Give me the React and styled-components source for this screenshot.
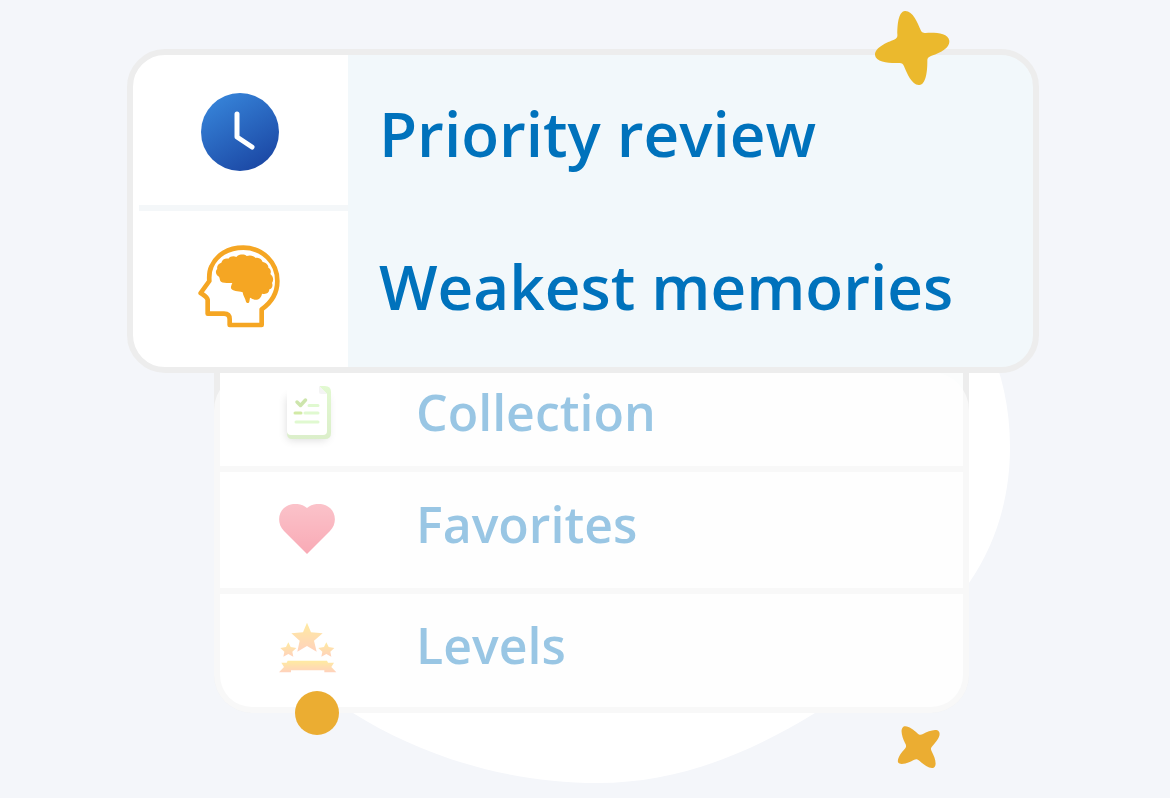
import React from 'react'
import styled, { createGlobalStyle } from 'styled-components'

const GlobalStyle = createGlobalStyle`
  * {
    box-sizing: border-box;
  }

  body {
    margin: 0;
    background: #f4f6fa;
    font-family: "Open Sans", "Noto Sans", sans-serif;
  }
`

const Stage = styled.main`
  position: relative;
  max-width: 1170px;
  min-height: 798px;
  margin: 0 auto;
  padding: 49px 131px 0 127px;
  overflow: hidden;
`

const Blob = styled.svg`
  position: absolute;
  left: 300px;
  top: 340px;
`

const Decoration = styled.svg`
  position: absolute;
  z-index: 3;
  left: ${({ $left }) => $left}px;
  top: ${({ $top }) => $top}px;
`

const MainCard = styled.ul`
  position: relative;
  z-index: 2;
  margin: 0;
  padding: 0 0 6px;
  list-style: none;
  border: 6px solid #ededed;
  border-radius: 38px;
  overflow: hidden;
  background: linear-gradient(to right, #fff 215px, #f2f8fb 215px);
`

const MoreCard = styled.ul`
  position: relative;
  z-index: 1;
  margin: -16px 70px 0 87px;
  padding: 0;
  list-style: none;
  border: 6px solid #ededed;
  border-top: 0;
  border-radius: 0 0 38px 38px;
  background: linear-gradient(to right, #fff 180px, #fcfdfd 180px);

  /* the fade over the rows that are not in focus */
  &::after {
    content: "";
    position: absolute;
    inset: 15px -6px -6px;
    border-radius: 38px;
    background: rgba(255, 255, 255, 0.6);
    pointer-events: none;
  }
`

const Item = styled.li`
  ${MoreCard} &:not(:first-child) {
    border-top: 6px solid #ededed;
  }
`

const ItemButton = styled.button`
  display: flex;
  align-items: stretch;
  width: 100%;
  height: ${({ $height }) => $height}px;
  padding: 0;
  border: 0;
  background: none;
  font: inherit;
  text-align: left;
  cursor: pointer;
`

const IconCell = styled.span`
  flex: none;
  display: flex;
  align-items: center;
  justify-content: center;
  width: ${({ $small }) => ($small ? 180 : 209)}px;
  margin-left: ${({ $small }) => ($small ? 0 : 6)}px;
  padding-right: 6px;

  ${MainCard} li:first-child & {
    border-bottom: 6px solid #f4f7f9;
  }
`

const Label = styled.span`
  display: flex;
  align-items: center;
  padding-left: ${({ $small }) => ($small ? 16 : 31)}px;
  color: #0072bc;
  font-size: ${({ $small }) => ($small ? 50 : 62)}px;
  font-weight: 600;
  line-height: 72px;
  white-space: nowrap;

  ${MoreCard} li:not(:first-child) & {
    padding-bottom: 12px;
  }
`

const ClockIcon = () => (
  <svg width="80" height="80" viewBox="0 0 80 80" overflow="visible" aria-hidden="true">
    <defs>
      <linearGradient id="clock" x1="0.2" y1="0" x2="0.8" y2="1">
        <stop offset="0" stopColor="#3785da" />
        <stop offset="1" stopColor="#1a45a2" />
      </linearGradient>
    </defs>
    <circle cx="39" cy="42" r="39" fill="url(#clock)" />
    <path d="M36 24V47L51 57" fill="none" stroke="#fff" strokeWidth="5" strokeLinecap="round" strokeLinejoin="round" />
  </svg>
)

const BrainIcon = () => (
  <svg width="85" height="85" viewBox="54 40 255 255" aria-hidden="true">
    <path
      d="M62 187L88 151C87 135 89 118 94 108C109 73 144 51 190 51C248 51 292 96 292 151C292 187 272 217 245 236V283H149V266C149 255 144 249 132 249H83V207C81 198 72 194 62 187Z"
      fill="none"
      stroke="#f5a623"
      strokeWidth="14"
      strokeLinejoin="round"
    />
    <path
      d="M117 138C105 132 106 119 112 115C109 107 116 98 124 96C126 87 136 82 145 84C151 76 162 75 169 79C177 70 193 70 200 76C210 72 222 75 227 82C237 79 246 87 248 94C259 95 266 104 265 111C273 115 274 124 271 130C280 137 282 149 276 157C280 166 275 175 268 176C268 187 258 192 246 189C244 203 232 211 220 206C216 205 213 202 210 201L208 213C207 218 200 218 198 213C196 204 189 195 188 185C174 181 157 182 153 173C152 168 155 162 157 157C143 158 130 157 123 153C119 149 120 143 117 138Z"
      fill="#f5a623"
    />
  </svg>
)

const CollectionIcon = () => (
  <svg width="60" height="64" viewBox="0 0 60 64" overflow="visible" aria-hidden="true">
    <defs>
      <filter id="soft" x="-40%" y="-40%" width="180%" height="180%">
        <feGaussianBlur stdDeviation="4" />
      </filter>
      <linearGradient id="page" x1="0" y1="0" x2="0" y2="1">
        <stop offset="0" stopColor="#b6f08c" />
        <stop offset="1" stopColor="#a6d67c" />
      </linearGradient>
    </defs>
    <rect x="10" y="16" width="41" height="44" rx="5" fill="#000" opacity="0.35" filter="url(#soft)" />
    <path d="M43 6H48Q54 6 54 12V53Q54 59 48 59H15Q10 59 10 53Z" fill="url(#page)" />
    <path d="M14 6H42L50 14V51Q50 55 46 55H14Q10 55 10 51V10Q10 6 14 6Z" fill="#fff" />
    <path d="M42 6L50 14H44Q42 14 42 12Z" fill="#e4e4e4" />
    <path d="M20 22L23.5 25.5L28.5 20" fill="none" stroke="#82be30" strokeWidth="3.5" strokeLinecap="round" strokeLinejoin="round" />
    <path d="M32 25.5H41M28 33H41M19 42H41" stroke="#b2f08a" strokeWidth="3" strokeLinecap="round" />
    <path d="M18 33H24" stroke="#8ecb22" strokeWidth="3" strokeLinecap="round" />
  </svg>
)

const HeartIcon = () => (
  <svg width="56" height="52" viewBox="0 0 56 52" aria-hidden="true">
    <defs>
      <linearGradient id="heart" x1="0" y1="0" x2="0" y2="1">
        <stop offset="0" stopColor="#f4687a" />
        <stop offset="1" stopColor="#f02c48" />
      </linearGradient>
    </defs>
    <path d="M28 50L5 27C-2 20-1 9 5 4C12-2 22-1 28 4C34-1 44-2 51 4C57 9 58 20 51 27Z" fill="url(#heart)" />
  </svg>
)

const LevelsIcon = () => (
  <svg width="58" height="58" viewBox="236 67 174 174" overflow="visible" aria-hidden="true">
    <defs>
      <linearGradient id="gold" x1="0" y1="0" x2="0" y2="1">
        <stop offset="0" stopColor="#ffcc14" />
        <stop offset="1" stopColor="#ff8e5a" />
      </linearGradient>
    </defs>
    <g fill="url(#gold)">
      <path d="M323 69L335 98L370 101L344 123L352 156L323 139L294 156L301 123L276 101L311 98Z" />
      <path d="M267 128L274 142L291 145L279 156L282 171L267 163L252 171L255 156L243 145L260 142Z" />
      <path d="M381 128L388 142L405 145L393 156L396 171L381 163L366 171L369 156L357 145L374 142Z" />
      <path d="M265 183H383L386 189H404L396 202L411 218H375V212H275V218H239L254 202L246 189H262Z" />
    </g>
  </svg>
)

const mainItems = [
  { label: 'Priority review', icon: ClockIcon, height: 156 },
  { label: 'Weakest memories', icon: BrainIcon, height: 150 },
]

const moreItems = [
  { label: 'Collection', icon: CollectionIcon, height: 109 },
  { label: 'Favorites', icon: HeartIcon, height: 116 },
  { label: 'Levels', icon: LevelsIcon, height: 113 },
]

const MenuItem = ({ label, icon: Icon, height, small }) => (
  <Item>
    <ItemButton type="button" $height={height}>
      <IconCell $small={small}>
        <Icon />
      </IconCell>
      <Label $small={small}>{label}</Label>
    </ItemButton>
  </Item>
)

const App = () => (
  <>
    <GlobalStyle />
    <Stage>
      <Blob width="720" height="450" viewBox="300 340 720 450" aria-hidden="true">
        <path
          d="M320 340H987C1002 373 1010 408 1010 447C1010 500 995 545 969 583C935 630 880 677 815 713C745 756 675 783 598 783C505 783 420 755 353 713L320 680Z"
          fill="#fff"
        />
      </Blob>

      <MainCard>
        {mainItems.map((item) => (
          <MenuItem key={item.label} {...item} />
        ))}
      </MainCard>

      <MoreCard>
        {moreItems.map((item) => (
          <MenuItem key={item.label} {...item} small />
        ))}
      </MoreCard>

      <Decoration $left={874} $top={10} width="76" height="76" viewBox="42 30 228 228" aria-hidden="true">
        <path
          d="M135 33C158 32 173 68 181 88C184 97 188 99 197 99C224 97 265 99 268 122C270 146 234 161 213 168C204 171 201 176 202 185C202 210 199 253 178 255C156 257 141 220 132 199C129 190 124 188 116 189C91 190 47 188 45 165C44 142 83 126 102 119C111 115 113 111 112 102C112 79 114 35 135 33Z"
          fill="#ebb92d"
        />
      </Decoration>
      <Decoration $left={295} $top={691} width="44" height="44" viewBox="0 0 44 44" aria-hidden="true">
        <circle cx="22" cy="22" r="22" fill="#ebad32" />
      </Decoration>
      <Decoration $left={897} $top={725} width="43" height="44" viewBox="51 165 129 132" aria-hidden="true">
        <path
          d="M70 170C84 165 101 180 112 190C119 196 123 195 129 192C144 185 168 174 177 185C184 197 169 215 158 227C151 235 152 238 156 246C164 261 173 286 161 293C149 298 129 282 119 273C112 267 108 267 101 270C86 278 61 288 54 277C51 264 65 247 74 237C80 229 79 226 75 219C67 203 59 179 70 170Z"
          fill="#ebad32"
        />
      </Decoration>
    </Stage>
  </>
)

export default App
